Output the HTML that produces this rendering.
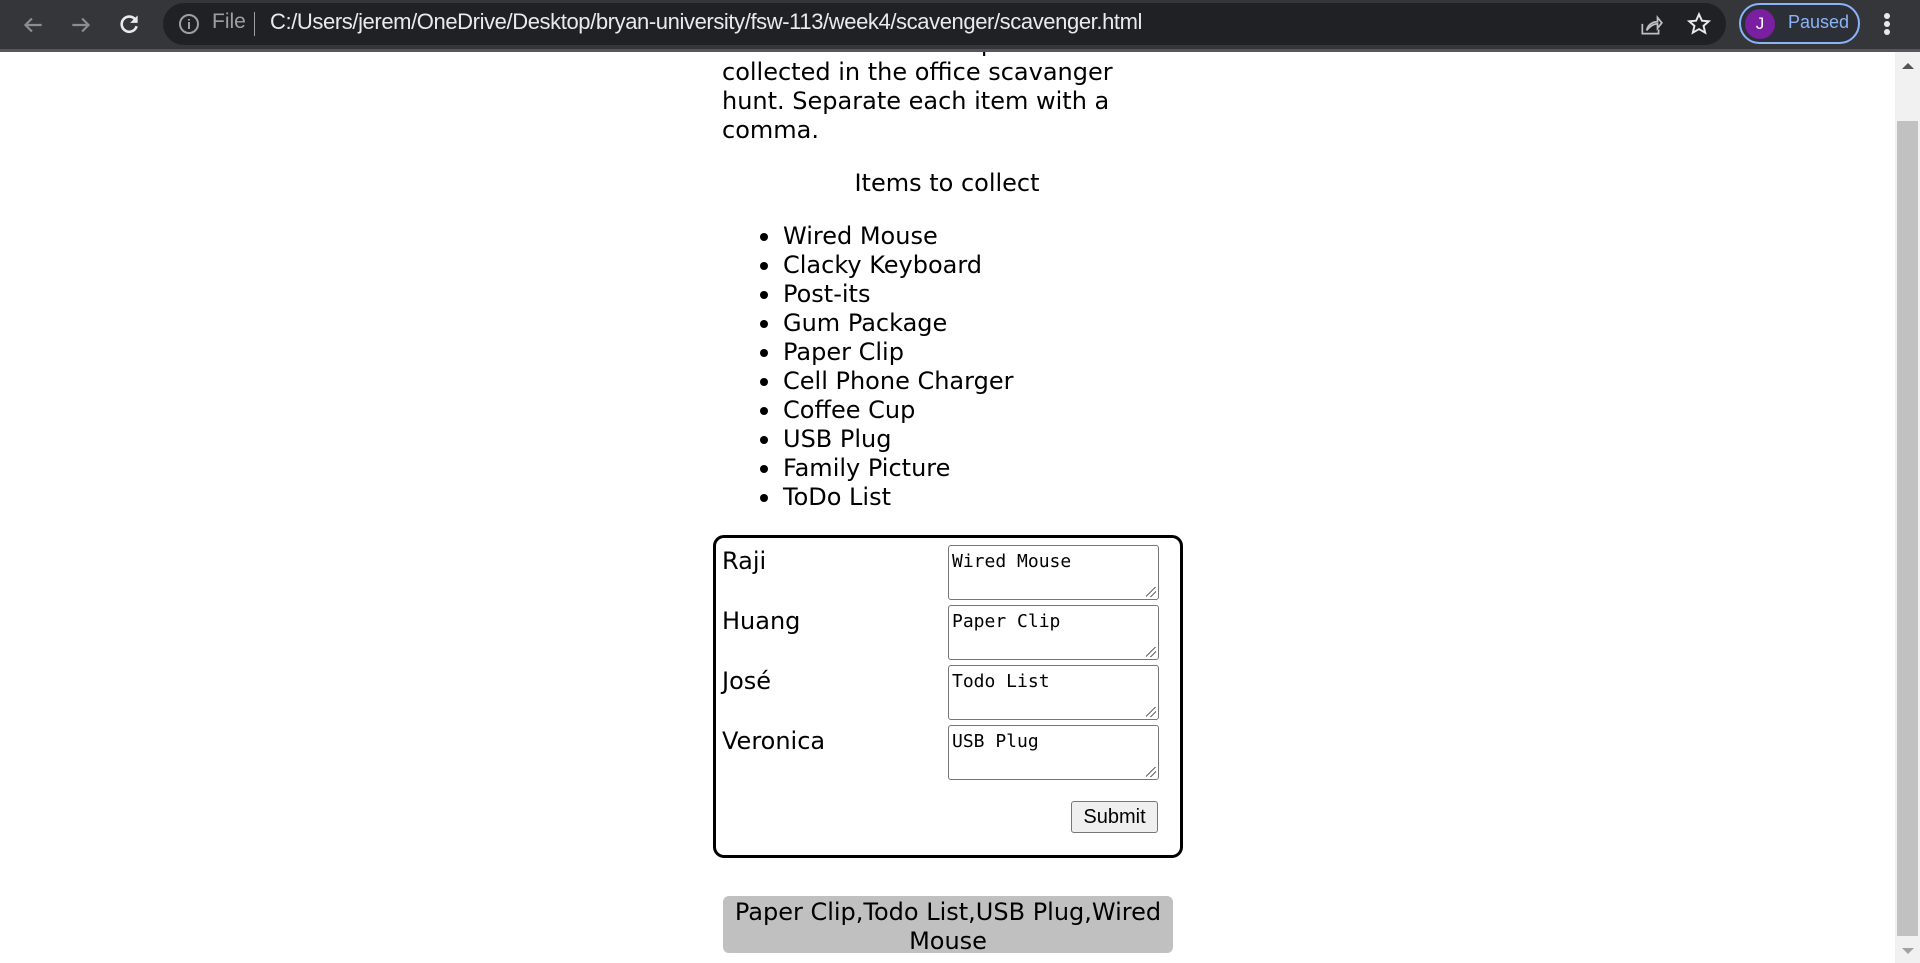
<!DOCTYPE html>
<html><head><meta charset="utf-8"><style>
*{margin:0;padding:0;box-sizing:border-box}
body{width:1920px;height:963px;overflow:hidden;background:#fff;position:relative;font-family:"DejaVu Sans",Verdana,sans-serif;color:#000}
.tb{position:absolute;left:0;top:0;width:1920px;height:52px;background:#35363a;border-bottom:3px solid #55575c;z-index:5}
.omni{position:absolute;left:163px;top:3px;width:1563px;height:42px;background:#202124;border-radius:21px}
.url{position:absolute;left:270px;top:9px;font:22px "Liberation Sans",sans-serif;color:#e8eaed;letter-spacing:-0.4px}
.file{position:absolute;left:212px;top:10px;font:21px "Liberation Sans",sans-serif;color:#9aa0a6}
.sep{position:absolute;left:254px;top:12px;width:1px;height:24px;background:#9aa0a6}
.prof{position:absolute;left:1739px;top:3px;width:121px;height:41px;border:2px solid #8ab4f8;border-radius:21px;background:#2d2f36}
.av{position:absolute;left:4px;top:4px;width:30px;height:30px;border-radius:50%;background:#7b1fa2;color:#fff;font:17px "Liberation Sans",sans-serif;text-align:center;line-height:30px}
.pz{position:absolute;left:47px;top:7px;font:18px "Liberation Sans",sans-serif;color:#8ab4f8}
.t{position:absolute;font-size:24px;line-height:29px;white-space:nowrap}
.sb{position:absolute;left:1895px;top:52px;width:25px;height:911px;background:#f1f1f1}
.th{position:absolute;left:1897px;top:121px;width:21px;height:815px;background:#c1c1c1}
.box{position:absolute;left:713px;top:535px;width:470px;height:323px;border:3px solid #000;border-radius:11px}
.ta{position:absolute;left:948px;width:211px;height:55px;border:1px solid #767676;border-radius:3px;font:18px "DejaVu Sans Mono",monospace;padding:5px 3px}
.ta:after{content:"";position:absolute;right:2px;bottom:2px;width:10px;height:10px;background:linear-gradient(135deg,transparent 45%,#666 45%,#666 52%,transparent 52%,transparent 70%,#666 70%,#666 77%,transparent 77%)}
.btn{position:absolute;left:1071px;top:801px;width:87px;height:32px;background:#efefef;border:1px solid #767676;border-radius:3px;font:20px "Liberation Sans",sans-serif;text-align:center;line-height:30px}
.res{position:absolute;left:723px;top:896px;width:450px;height:57px;background:#c0c0c0;border-radius:6px;text-align:center;font-size:24px;line-height:29px;padding-top:2px}
.dot{position:absolute;left:760px;width:8px;height:8px;border-radius:50%;background:#000}
</style></head><body>
<div class="tb">
<svg style="position:absolute;left:20px;top:12px" width="26" height="26" viewBox="0 0 24 24"><path d="M20 12H5M11 6l-6 6 6 6" stroke="#8a8d91" stroke-width="2" fill="none"/></svg>
<svg style="position:absolute;left:68px;top:12px" width="26" height="26" viewBox="0 0 24 24"><path d="M4 12h15M13 6l6 6-6 6" stroke="#8a8d91" stroke-width="2" fill="none"/></svg>
<svg style="position:absolute;left:116px;top:11px" width="26" height="26" viewBox="0 0 24 24"><path d="M18.5 9A7 7 0 1 0 19 14" stroke="#e8eaed" stroke-width="2.4" fill="none"/><path d="M20 4v7h-7z" fill="#e8eaed"/></svg>
<div class="omni"></div>
<svg style="position:absolute;left:177px;top:12px" width="24" height="24" viewBox="0 0 24 24"><circle cx="12" cy="12" r="9" stroke="#9aa0a6" stroke-width="2" fill="none"/><path d="M12 10v7M12 7v1.5" stroke="#9aa0a6" stroke-width="2"/></svg>
<div class="file">File</div><div class="sep"></div>
<div class="url">C:/Users/jerem/OneDrive/Desktop/bryan-university/fsw-113/week4/scavenger/scavenger.html</div>
<svg style="position:absolute;left:1638px;top:12px" width="26" height="26" viewBox="0 0 24 24"><path d="M4 11v9h15v-4M8 17c1-5 5-8 10-8V5l4 5-4 5v-4c-4 0-7 2-10 6z" stroke="#bdc1c6" stroke-width="1.6" fill="none"/></svg>
<svg style="position:absolute;left:1686px;top:11px" width="26" height="26" viewBox="0 0 24 24"><path d="M12 3l2.7 6 6.3.5-4.8 4.2 1.5 6.3L12 16.7 6.3 20l1.5-6.3L3 9.5 9.3 9z" stroke="#e8eaed" stroke-width="1.8" fill="none"/></svg>
<div class="prof"><div class="av">J</div><div class="pz">Paused</div></div>
<div style="position:absolute;left:1884px;top:13px;width:6px;height:6px;border-radius:50%;background:#e8eaed"></div>
<div style="position:absolute;left:1884px;top:21px;width:6px;height:6px;border-radius:50%;background:#e8eaed"></div>
<div style="position:absolute;left:1884px;top:29px;width:6px;height:6px;border-radius:50%;background:#e8eaed"></div>
</div>
<div class="sb"></div><div class="th"></div>
<div style="position:absolute;left:1902px;top:63px;width:0;height:0;border-left:6px solid transparent;border-right:6px solid transparent;border-bottom:6px solid #555"></div>
<div style="position:absolute;left:1902px;top:948px;width:0;height:0;border-left:6px solid transparent;border-right:6px solid transparent;border-top:6px solid #a3a3a3"></div>

<div class="t" style="left:722px;top:29px">Enter the items each person<br>collected in the office scavanger<br>hunt. Separate each item with a<br>comma.</div>
<div class="t" style="left:722px;width:450px;text-align:center;top:169px">Items to collect</div>
<div class="t" style="left:783px;top:222px">Wired Mouse<br>Clacky Keyboard<br>Post-its<br>Gum Package<br>Paper Clip<br>Cell Phone Charger<br>Coffee Cup<br>USB Plug<br>Family Picture<br>ToDo List</div>
<div class="dot" style="top:233px"></div><div class="dot" style="top:262px"></div><div class="dot" style="top:291px"></div><div class="dot" style="top:320px"></div><div class="dot" style="top:349px"></div><div class="dot" style="top:378px"></div><div class="dot" style="top:407px"></div><div class="dot" style="top:436px"></div><div class="dot" style="top:465px"></div><div class="dot" style="top:494px"></div>

<div class="box"></div>
<div class="t" style="left:722px;top:547px">Raji</div>
<div class="t" style="left:722px;top:607px">Huang</div>
<div class="t" style="left:722px;top:667px">José</div>
<div class="t" style="left:722px;top:727px">Veronica</div>
<div class="ta" style="top:545px">Wired Mouse</div>
<div class="ta" style="top:605px">Paper Clip</div>
<div class="ta" style="top:665px">Todo List</div>
<div class="ta" style="top:725px">USB Plug</div>
<div class="btn">Submit</div>
<div class="res">Paper Clip,Todo List,USB Plug,Wired<br>Mouse</div>
</body></html>
